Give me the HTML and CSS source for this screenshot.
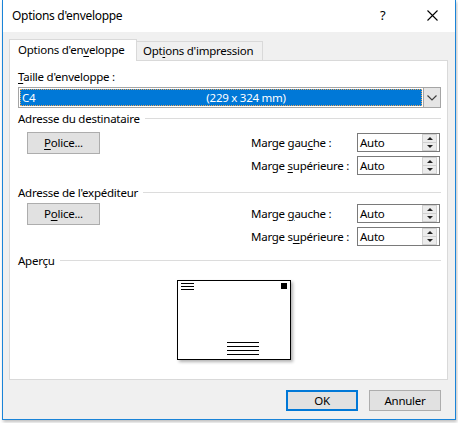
FILE: index.html
```html
<!DOCTYPE html>
<html lang="fr">
<head>
<meta charset="utf-8">
<link rel="stylesheet" href="styles.css">
</head>
<body>
<div class="window">
  <div class="titlebar">
    <span class="title">Options d'enveloppe</span>
    <span class="help">?</span>
    <span class="close"><svg width="11" height="11" viewBox="0 0 11 11"><path d="M0.5 0.5 L10.5 10.5 M10.5 0.5 L0.5 10.5" stroke="#000" stroke-width="1.1" fill="none"/></svg></span>
  </div>
  <div class="client">
    <div class="tabs">
      <div class="tab active">Options d'en<u>v</u>eloppe</div>
      <div class="tab">Opt<u>i</u>ons d'impression</div>
    </div>
    <div class="panel">
      <div class="label-top"><u>T</u>aille d'enveloppe :</div>
      <div class="combo">
        <div class="combo-sel"><span>C4</span><span class="dims">(229 x 324 mm)</span></div>
        <div class="combo-btn"><svg width="10" height="6" viewBox="0 0 10 6"><path d="M0.5 0.5 L5 5 L9.5 0.5" stroke="#404040" stroke-width="1.2" fill="none"/></svg></div>
      </div>

      <div class="group-head"><span>Adresse du destinataire</span><span class="rule"></span></div>
      <div class="group">
        <div class="btn police"><u>P</u>olice...</div>
        <div class="fields">
          <div class="field"><span class="flabel">Marge gau<u>c</u>he :</span><div class="spin"><span class="val">Auto</span><div class="arrows"><span class="up"></span><span class="down"></span></div></div></div>
          <div class="field"><span class="flabel">Marge <u>s</u>upérieure :</span><div class="spin"><span class="val">Auto</span><div class="arrows"><span class="up"></span><span class="down"></span></div></div></div>
        </div>
      </div>

      <div class="group-head second"><span>Adresse de l'expéditeur</span><span class="rule"></span></div>
      <div class="group">
        <div class="btn police">P<u>o</u>lice...</div>
        <div class="fields">
          <div class="field"><span class="flabel">Marge <u>g</u>auche :</span><div class="spin"><span class="val">Auto</span><div class="arrows"><span class="up"></span><span class="down"></span></div></div></div>
          <div class="field"><span class="flabel">Marge s<u>u</u>périeure :</span><div class="spin"><span class="val">Auto</span><div class="arrows"><span class="up"></span><span class="down"></span></div></div></div>
        </div>
      </div>

      <div class="group-head third"><span>Aperçu</span><span class="rule"></span></div>
      <div class="preview">
        <div class="envelope">
          <div class="ret"><i></i><i></i><i></i></div>
          <div class="stamp"></div>
          <div class="addr"><i></i><i></i><i></i><i></i></div>
        </div>
      </div>
    </div>
    <div class="footer">
      <div class="btn ok">OK</div>
      <div class="btn">Annuler</div>
    </div>
  </div>
</div>
</body>
</html>
```

FILE: styles.css
```css
* { box-sizing: border-box; }
html, body { margin: 0; padding: 0; }
body {
  width: 458px; height: 423px;
  background: #ffffff;
  font-family: "Noto Sans", "Open Sans", sans-serif;
  font-size: 11.5px;
  letter-spacing: -0.25px;
  color: #000;
  overflow: hidden;
}
u { text-decoration: underline; text-underline-offset: 2px; }

.window {
  margin-left: 2px;
  width: 454px;
  height: 420px;
  border: 1px solid #1a84d8;
  border-top: none;
  background: #f0f0f0;
  box-shadow: 1px 2px 3px rgba(0,0,0,0.25);
  display: flex;
  flex-direction: column;
}
.titlebar {
  height: 32px;
  background: #fff;
  display: flex;
  align-items: center;
  padding-left: 9px;
  flex: none;
}
.title { font-size: 12px; letter-spacing: -0.3px; flex: 1; margin-top: -1px; }
.help { font-size: 13px; width: 10px; margin-right: 37px; margin-top: -2px; }
.close { width: 11px; margin-right: 17px; display: flex; margin-top: -1px; }

.client {
  flex: 1;
  padding: 7px 7px 0 6px;
  display: flex;
  flex-direction: column;
}
.tabs { display: flex; align-items: flex-end; height: 21px; position: relative; z-index: 1; }
.tab {
  height: 19px;
  padding: 0 0 0 6px;
  border: 1px solid #d9d9d9;
  border-bottom: none;
  border-left: none;
  background: #f0f0f0;
  line-height: 18px;
  width: 126px;
  white-space: nowrap;
}
.tab.active {
  height: 22px;
  width: 128px;
  background: #fff;
  border-left: 1px solid #d9d9d9;
  margin-bottom: -1px;
  padding-left: 8px;
  line-height: 20px;
}
.panel {
  height: 320px;
  width: 439px;
  background: #fff;
  border: 1px solid #d9d9d9;
  padding: 8px 6px 0 8px;
  display: flex;
  flex-direction: column;
}
.label-top { height: 18px; line-height: 16px; }
.combo {
  height: 21px;
  width: 423px;
  border: 1px solid #a5a5a5;
  display: flex;
  padding: 1px;
  flex: none;
}
.combo-sel {
  flex: 1;
  background: #0078d7;
  color: #fff;
  border: 1px dotted #e9a55a;
  display: flex;
  align-items: center;
  padding-left: 1px;
  line-height: 15px;
}
.combo-sel .dims { margin-left: 171px; }
.combo-btn {
  width: 18px;
  margin: -2px -2px -2px 1px;
  background: #e5e5e5;
  border: 1px solid #a5a5a5;
  display: flex;
  align-items: center;
  justify-content: center;
}
.group-head {
  display: flex;
  align-items: center;
  height: 21px;
  line-height: 16px;
  flex: none;
}
.group-head .rule { flex: 1; height: 1px; background: #dcdcdc; margin-left: 5px; margin-top: -1px; }
.group-head.second { margin-top: 7px; margin-bottom: -3px; }
.group-head.third { margin-top: 4px; }

.group { display: flex; align-items: flex-start; padding-top: 3px; flex: none; }
.btn {
  width: 73px;
  height: 22px;
  background: #e1e1e1;
  border: 1px solid #adadad;
  display: flex;
  align-items: center;
  justify-content: center;
  line-height: 16px;
}
.police { margin-left: 9px; }
.fields { margin-left: 151px; display: flex; flex-direction: column; gap: 4px; margin-top: 1px; }
.field { display: flex; align-items: center; height: 19px; }
.flabel { width: 106px; }
.spin {
  width: 83px;
  height: 19px;
  border: 1px solid #7a7a7a;
  display: flex;
  align-items: center;
  padding-left: 2px;
  background: #fff;
}
.spin .val { flex: 1; }
.arrows { width: 15px; height: 17px; display: flex; flex-direction: column; margin-right: 2px; }
.arrows span {
  flex: 1;
  background: #ececec;
  border: 1px solid #d0d0d0;
  position: relative;
}
.arrows .up { border-bottom: none; }
.arrows span::after {
  content: "";
  position: absolute;
  left: 50%;
  top: 50%;
  margin-left: -3px;
  border-left: 3px solid transparent;
  border-right: 3px solid transparent;
}
.arrows .up::after { border-bottom: 3px solid #202020; margin-top: -2px; }
.arrows .down::after { border-top: 3px solid #202020; margin-top: -2px; }

.preview { display: flex; padding-top: 9px; padding-left: 159px; flex: none; }
.envelope {
  width: 114px;
  height: 80px;
  border: 1px solid #000;
  box-shadow: 2px 2px 3px rgba(0,0,0,0.3);
  position: relative;
  background: #fff;
}
.ret { position: absolute; left: 3px; top: 2px; width: 13px; display: flex; flex-direction: column; gap: 2px; }
.ret i, .addr i { display: block; height: 1px; background: #000; }
.stamp { position: absolute; right: 3px; top: 2px; width: 6px; height: 6px; background: #000; }
.addr { position: absolute; left: 49px; top: 61px; width: 32px; display: flex; flex-direction: column; gap: 3px; }

.footer {
  display: flex;
  justify-content: flex-end;
  gap: 11px;
  padding-top: 10px;
  padding-right: 7px;
}
.footer .btn { width: 72px; height: 21px; }
.footer .btn.ok { border: 2px solid #0078d7; }
```
